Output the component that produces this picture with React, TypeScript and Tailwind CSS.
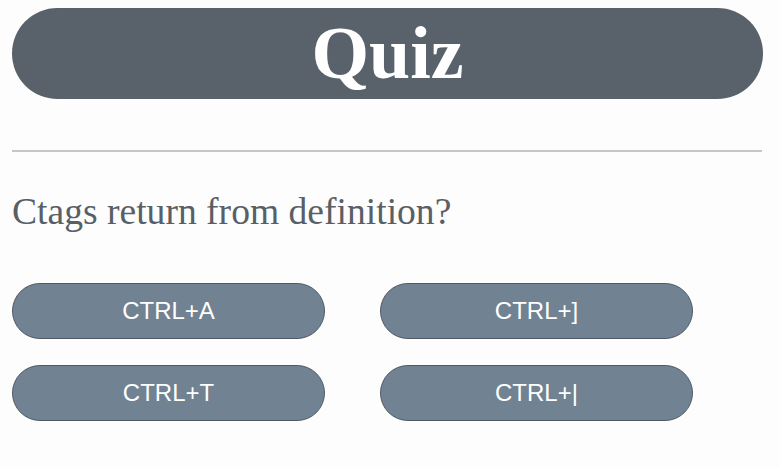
import React from 'react';

const options = ['CTRL+A', 'CTRL+]', 'CTRL+T', 'CTRL+|'];

const App: React.FC = () => {
  return (
    <div className="w-[780px] h-[468px] bg-[#fdfdfd] px-3 pt-2" style={{ fontFamily: '"Liberation Serif", serif' }}>
      <div className="w-[751px] h-[91px] rounded-full bg-[#59626b] flex items-center justify-center">
        <h1 className="text-[74px] font-bold text-white leading-none pb-[1px]">Quiz</h1>
      </div>
      <hr className="mt-[51px] w-[750px] border-0 border-t-2 border-[#c6c6c6]" />
      <p className="mt-[41px] text-[37.6px] leading-none text-[#595f66]">Ctags return from definition?</p>
      <div className="mt-[52px] grid grid-cols-[313px_313px] gap-x-[55px] gap-y-[26px]">
        {options.map((opt) => (
          <button
            key={opt}
            className="h-[56px] rounded-full bg-[#718292] border border-[#4f5a66] text-white text-[24px] flex items-center justify-center"
            style={{ fontFamily: '"Liberation Sans", Arial, sans-serif' }}
          >
            {opt}
          </button>
        ))}
      </div>
    </div>
  );
};

export default App;
